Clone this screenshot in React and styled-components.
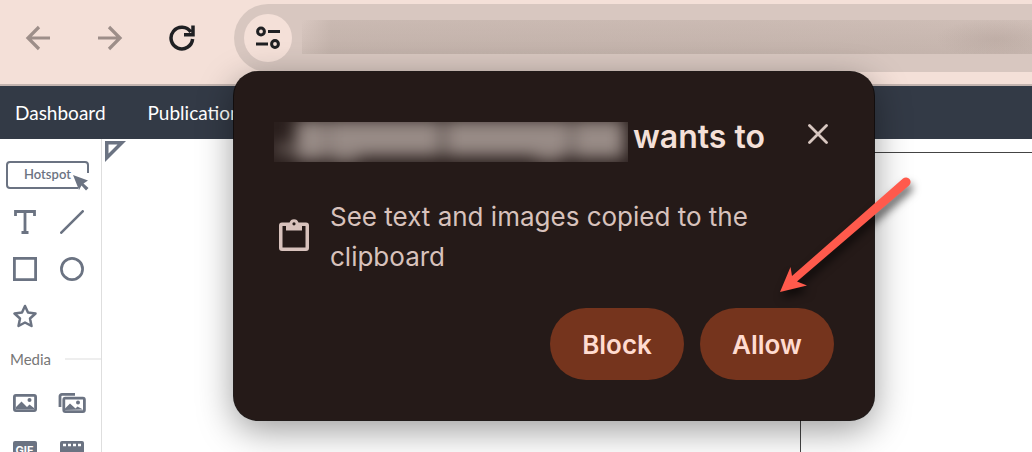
import React from "react";
import styled, { createGlobalStyle } from "styled-components";

const Global = createGlobalStyle`
  *, *::before, *::after { box-sizing: border-box; }
  html, body, #root { height: 100%; }
  body { margin: 0; background: #fff; overflow: hidden; font-family: Inter, "Liberation Sans", sans-serif; }
  button { font: inherit; color: inherit; border: 0; padding: 0; background: none; cursor: pointer; }
  svg { display: block; flex: none; }
`;

const Page = styled.div`
  height: 100%;
  display: flex;
  flex-direction: column;
`;

const BrowserBar = styled.header`
  display: flex;
  flex: none;
  padding: 4px 0 12px 20px;
  background: #f4e0d8;
  border-bottom: 2px solid #c3b4af;
`;

const HistoryControls = styled.div`
  display: flex;
  align-items: center;
  gap: 36px;
  width: 214px;
  flex: none;
`;

const BarButton = styled.button`
  width: 36px;
  height: 36px;
  display: grid;
  place-items: center;
  color: ${(p) => (p.$muted ? "#9d8e89" : "#1f2023")};
`;

const AddressBar = styled.div`
  position: relative;
  flex: 1;
  min-width: 0;
  height: 68px;
  padding-left: 10px;
  display: flex;
  align-items: center;
  gap: 10px;
  background: #d8c7c0;
  border-radius: 34px 0 0 34px;
`;

const SiteInfoButton = styled.button`
  width: 48px;
  height: 48px;
  flex: none;
  display: grid;
  place-items: center;
  border-radius: 50%;
  background: #f4e0d8;
  color: #1f2023;
`;

const HiddenAddress = styled.div`
  flex: 1;
  height: 34px;
  margin-bottom: 2px;
  background:
    radial-gradient(ellipse 60px 20px at 95% 55%, rgba(120, 100, 92, 0.12), transparent),
    linear-gradient(90deg, rgba(150, 135, 126, 0), rgba(150, 135, 126, 0.22) 4%, rgba(150, 135, 126, 0.2) 60%, rgba(150, 135, 126, 0.14)),
    linear-gradient(180deg, rgba(150, 135, 126, 0), rgba(150, 135, 126, 0.16));
`;

const Popover = styled.section`
  position: absolute;
  z-index: 2;
  top: 68px;
  left: 0;
  width: 640px;
  padding: 40px;
  border-radius: 24px;
  background: #251a18;
  box-shadow: 0 0 0 1px rgba(16, 10, 9, 0.9), 0 10px 36px rgba(0, 0, 0, 0.4);
`;

const PopoverHeader = styled.div`
  display: flex;
  align-items: flex-start;
  justify-content: space-between;
`;

const Title = styled.h1`
  display: flex;
  align-items: flex-end;
  gap: 5px;
  margin: 0;
  color: #f4e0d8;
  font-size: 32px;
  line-height: 50px;
  font-weight: 600;
`;

const CloseButton = styled.button`
  width: 32px;
  height: 32px;
  margin-top: 6px;
  display: grid;
  place-items: center;
  color: #d8c7c0;
`;

const Permission = styled.div`
  display: flex;
  align-items: center;
  gap: 16px;
  margin-top: 35px;
  color: #d8c2bc;
`;

const PermissionText = styled.p`
  margin: 0;
  max-width: 440px;
  font-size: 26px;
  line-height: 40px;
`;

const Actions = styled.div`
  display: flex;
  justify-content: flex-end;
  gap: 16px;
  margin-top: 31px;
`;

const ActionButton = styled.button`
  width: 134px;
  height: 72px;
  border-radius: 36px;
  background: #75341d;
  color: #ffdbd0;
  font-size: 26px;
  font-weight: 600;
`;

const Nav = styled.nav`
  flex: none;
  height: 53px;
  display: flex;
  align-items: center;
  gap: 42px;
  padding: 0 15px;
  background: #333a46;
`;

const NavLink = styled.a`
  color: #fff;
  font-family: Lato, sans-serif;
  font-size: 19px;
  text-decoration: none;
`;

const Workspace = styled.div`
  flex: 1;
  min-height: 0;
  display: flex;
`;

const Sidebar = styled.aside`
  width: 102px;
  flex: none;
  overflow: hidden;
  padding-top: 22px;
  border-right: 1px solid #dedede;
  color: #6b7382;
`;

const HotspotButton = styled.button`
  position: relative;
  display: block;
  width: 83px;
  height: 28px;
  margin: 0 0 9px 6px;
  padding-bottom: 2px;
  border: 2px solid #6b7382;
  border-radius: 4px;
  font-family: Lato, sans-serif;
  font-size: 13px;
  font-weight: 600;
`;

const Cursor = styled.svg`
  position: absolute;
  right: -3px;
  bottom: -4px;
`;

const ToolGrid = styled.div`
  display: grid;
  grid-template-columns: 47px 47px;
  grid-auto-rows: 47px;
  padding-left: 1px;
`;

const Tool = styled.button`
  display: grid;
  place-items: center;
`;

const GifBadge = styled.span`
  width: 24px;
  height: 18px;
  border-radius: 2px;
  background: #6b7382;
  color: #fff;
  font-size: 11px;
  line-height: 19px;
  font-weight: 700;
`;

const SectionHeading = styled.h2`
  display: flex;
  align-items: center;
  gap: 14px;
  margin: 10px 0;
  padding-left: 10px;
  color: #777;
  font-family: Lato, sans-serif;
  font-size: 15px;
  line-height: 20px;
  font-weight: 400;
  &::after { content: ""; flex: 1; height: 2px; background: #eee; }
`;

const Canvas = styled.main`
  position: relative;
  flex: 1;
  display: grid;
  grid-template-columns: 3fr 1fr;
  padding-top: 13px;
`;

const Corner = styled.svg`
  position: absolute;
  top: 2px;
  left: 3px;
`;

const Sheet = styled.div`
  grid-column: 2;
  border: solid #444;
  border-width: 1px 0 0 1px;
`;

const Pointer = styled.svg`
  position: absolute;
  z-index: 3;
  top: 97px;
  left: 530px;
  overflow: visible;
  pointer-events: none;
  filter: drop-shadow(2px 6px 4px rgba(0, 0, 0, 0.6));
`;

const BlurredName = () => (
  <svg width="354" height="40" viewBox="0 0 354 40" aria-hidden="true">
    <defs>
      <filter id="soft" filterUnits="userSpaceOnUse" x="-40" y="-40" width="440" height="120"><feGaussianBlur stdDeviation="8" /></filter>
    </defs>
    <rect width="354" height="40" fill="#2a1f1d" />
    <g filter="url(#soft)" fill="#988b86">
      <rect x="0" y="22" width="20" height="10" opacity=".6" />
      <rect x="22" y="-2" width="30" height="40" />
      <rect x="54" y="-2" width="112" height="36" />
      <rect x="58" y="30" width="26" height="12" opacity=".7" />
      <rect x="172" y="-2" width="124" height="36" />
      <rect x="262" y="28" width="26" height="12" opacity=".8" />
      <rect x="300" y="-2" width="50" height="38" />
      <rect x="40" y="-2" width="300" height="34" opacity=".4" />
    </g>
  </svg>
);

export default function App() {
  return (
    <Page>
      <Global />
      <BrowserBar>
        <HistoryControls>
          <BarButton $muted aria-label="Back">
            <svg width="26" height="26" viewBox="0 0 26 26" fill="none" stroke="currentColor" strokeWidth="3.2"><path d="M25 13H3M14 2L3 13l11 11" /></svg>
          </BarButton>
          <BarButton $muted aria-label="Forward">
            <svg width="26" height="26" viewBox="0 0 26 26" fill="none" stroke="currentColor" strokeWidth="3.2"><path d="M1 13h22M12 2l11 11-11 11" /></svg>
          </BarButton>
          <BarButton aria-label="Reload">
            <svg width="26" height="26" viewBox="0 0 26 26" fill="none" stroke="currentColor" strokeWidth="3.5"><path d="M23.6 14A10.8 10.8 0 1 1 21.8 7M24 .5v9.3H15" /></svg>
          </BarButton>
        </HistoryControls>
        <AddressBar>
          <SiteInfoButton aria-label="Site information">
            <svg width="24" height="24" viewBox="0 0 24 24" fill="none" stroke="currentColor" strokeWidth="3"><circle cx="5" cy="5.5" r="3.4" /><path d="M12 5.5h12M0 18h12" /><circle cx="19" cy="18" r="3.4" /></svg>
          </SiteInfoButton>
          <HiddenAddress />
          <Popover role="dialog" aria-labelledby="prompt-title">
            <PopoverHeader>
              <Title id="prompt-title"><BlurredName />wants to</Title>
              <CloseButton aria-label="Close">
                <svg width="20" height="20" viewBox="0 0 20 20" stroke="currentColor" strokeWidth="2.8" strokeLinecap="round"><path d="M1.5 1.5l17 17M18.5 1.5l-17 17" /></svg>
              </CloseButton>
            </PopoverHeader>
            <Permission>
              <svg width="40" height="40" viewBox="0 2 40 40" fill="currentColor"><path fillRule="evenodd" d="M8 7.500h7.500a4.700 4.700 0 0 1 9 0H32a3 3 0 0 1 3 3V33a3 3 0 0 1-3 3H8a3 3 0 0 1-3-3V10.500a3 3 0 0 1 3-3zM8.500 11v21.500h23V11H28v4.500H12V11zM20 7.200a1.600 1.600 0 1 0 0 3.200 1.600 1.600 0 0 0 0-3.200z" /></svg>
              <PermissionText>See text and images copied to the clipboard</PermissionText>
            </Permission>
            <Actions>
              <ActionButton>Block</ActionButton>
              <ActionButton>Allow</ActionButton>
            </Actions>
            <Pointer width="160" height="130" viewBox="0 0 160 130" fill="#ff5a4c" aria-hidden="true">
              <path d="M139 9.500a4.500 4.500 0 0 1 6 7L33 112.500l10 4L16 123l10.500-25L28 107z" />
            </Pointer>
          </Popover>
        </AddressBar>
      </BrowserBar>
      <Nav>
        <NavLink href="#dashboard">Dashboard</NavLink>
        <NavLink href="#publications">Publications</NavLink>
      </Nav>
      <Workspace>
        <Sidebar>
          <HotspotButton>
            Hotspot
            <Cursor width="18" height="18" viewBox="0 0 18 18"><path d="M11 0h7v18H6v-4z" fill="#fff" /><path d="M1 2l15 5.500-4.500 3 5 4.500-2.500 2.500-4.500-5-2.500 4.500z" fill="#6b7382" /></Cursor>
          </HotspotButton>
          <ToolGrid>
            <Tool aria-label="Text"><svg width="22" height="24" viewBox="0 0 22 24" fill="none" stroke="currentColor" strokeWidth="2.800"><path d="M1.500 6V1.500h19V6M11 1.500v21M7.500 22.500h7" /></svg></Tool>
            <Tool aria-label="Line"><svg width="24" height="24" viewBox="0 0 24 24" stroke="currentColor" strokeWidth="2.600" strokeLinecap="round"><path d="M1.300 22.700L22.700 1.300" /></svg></Tool>
            <Tool aria-label="Rectangle"><svg width="24" height="24" viewBox="0 0 24 24" fill="none" stroke="currentColor" strokeWidth="2.800"><path d="M1.400 1.400h21.200v21.200H1.400z" /></svg></Tool>
            <Tool aria-label="Ellipse"><svg width="24" height="24" viewBox="0 0 24 24" fill="none" stroke="currentColor" strokeWidth="2.700"><circle cx="12" cy="12" r="10.600" /></svg></Tool>
            <Tool aria-label="Star"><svg width="24" height="24" viewBox="0 0 24 24" fill="none" stroke="currentColor" strokeWidth="2.500" strokeLinejoin="round"><path d="M12 2l3 6.500 7.500 1-5.500 5 1.500 7.500L12 18.500 5.500 22 7 14.500l-5.500-5 7.500-1z" /></svg></Tool>
          </ToolGrid>
          <SectionHeading>Media</SectionHeading>
          <ToolGrid>
            <Tool aria-label="Image">
              <svg width="24" height="18" viewBox="0 0 24 18"><rect x="1.400" y="1.400" width="21.200" height="15.200" rx="1.500" fill="none" stroke="currentColor" strokeWidth="2.800" /><circle cx="16.500" cy="6" r="2" fill="currentColor" /><path d="M3 15v-2l5.500-5.500L14 13l2.500-2.500L21 14v1z" fill="currentColor" /></svg>
            </Tool>
            <Tool aria-label="Gallery">
              <svg width="28" height="20" viewBox="0 0 28 20"><path d="M2 14V3.500A2 2 0 0 1 4 1.400h13" fill="none" stroke="currentColor" strokeWidth="2.800" /><rect x="5.800" y="5.200" width="20.600" height="13.400" rx="1.500" fill="none" stroke="currentColor" strokeWidth="2.800" /><circle cx="20" cy="9.500" r="2" fill="currentColor" /><path d="M7 17v-1.500l5-5 5.500 5 2-2 5.500 3z" fill="currentColor" /></svg>
            </Tool>
            <Tool aria-label="GIF"><GifBadge>GIF</GifBadge></Tool>
            <Tool aria-label="Video">
              <svg width="24" height="18" viewBox="0 0 24 18"><rect width="24" height="18" rx="2" fill="currentColor" /><path d="M3 4h18" stroke="#fff" strokeWidth="2.500" strokeDasharray="3 2" /></svg>
            </Tool>
          </ToolGrid>
        </Sidebar>
        <Canvas>
          <Corner width="21" height="21" viewBox="0 0 21 21"><path fillRule="evenodd" d="M0 0h21L0 21zM3.500 3.500v9l9-9z" fill="#6b7382" /></Corner>
          <Sheet />
        </Canvas>
      </Workspace>
    </Page>
  );
}
